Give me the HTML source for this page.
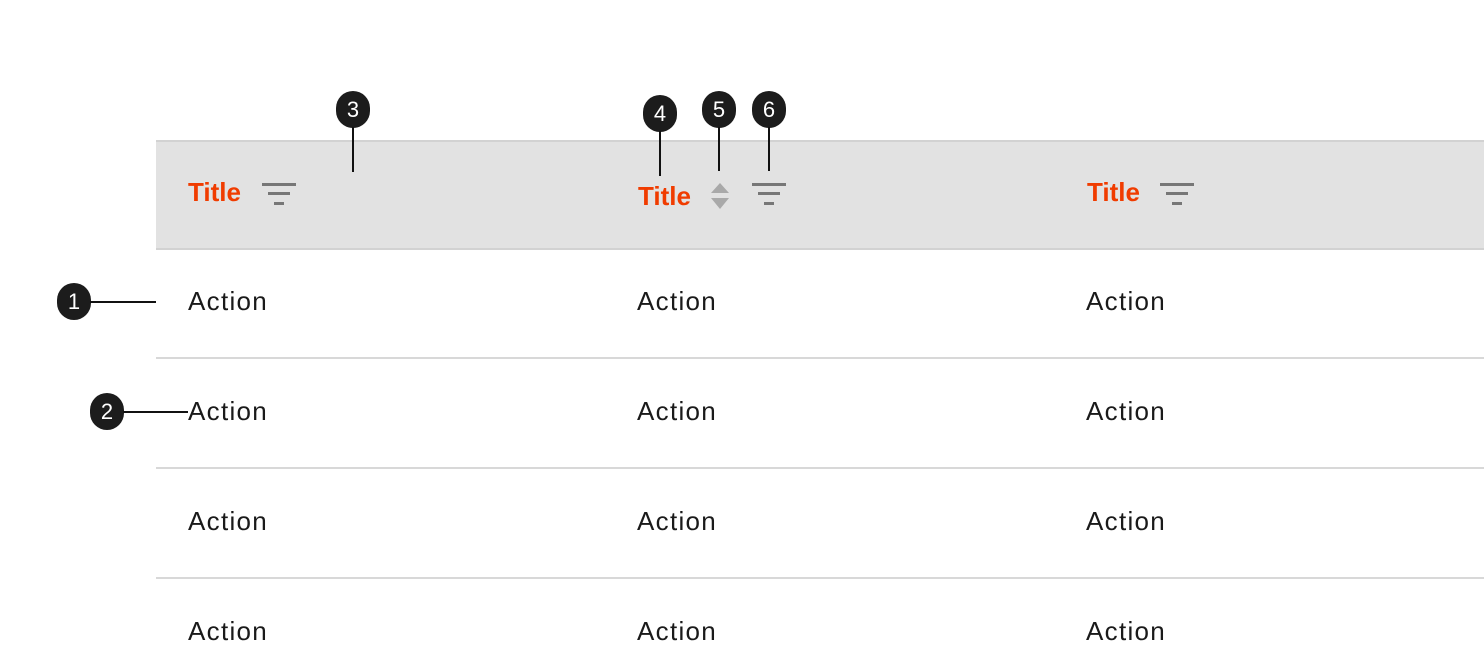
<!DOCTYPE html>
<html><head><meta charset="utf-8"><style>
body{margin:0;width:1484px;height:672px;background:#fff;position:relative;overflow:hidden;font-family:"Liberation Sans",Arial,sans-serif}
.a{position:absolute}
.hdr{left:156px;top:140px;width:1328px;height:106px;background:#e2e2e2;border-top:2px solid #d2d2d2;border-bottom:2px solid #d2d2d2;box-sizing:content-box}
.line{left:156px;width:1328px;height:2px;background:#d8d8d8}
.t{color:#f03c00;font-weight:bold;font-size:26px;line-height:30px}
.c{color:#1a1a1a;font-size:26px;letter-spacing:1.3px;line-height:30px}
.b{width:34px;height:37px;border-radius:17px;background:#1c1c1c;color:#fff;font-size:22px;text-align:center;line-height:37px}
.v{width:2px;background:#111}
.h{height:2px;background:#111}
.f{width:34px;height:24px}
.f i{position:absolute;height:3px;background:#777}
</style></head><body>
<div class="a hdr"></div>
<div class="a line" style="top:357px"></div>
<div class="a line" style="top:467px"></div>
<div class="a line" style="top:577px"></div>

<div class="a t" style="left:188px;top:177px">Title</div>
<div class="a t" style="left:638px;top:181px">Title</div>
<div class="a t" style="left:1087px;top:177px">Title</div>

<div class="a f" style="left:262px;top:183px"><i style="left:0;width:34px;top:0"></i><i style="left:6px;width:22px;top:9px"></i><i style="left:12px;width:10px;top:19px"></i></div>
<div class="a f" style="left:752px;top:183px"><i style="left:0;width:34px;top:0"></i><i style="left:6px;width:22px;top:9px"></i><i style="left:12px;width:10px;top:19px"></i></div>
<div class="a f" style="left:1160px;top:183px"><i style="left:0;width:34px;top:0"></i><i style="left:6px;width:22px;top:9px"></i><i style="left:12px;width:10px;top:19px"></i></div>

<svg class="a" style="left:710px;top:182px" width="20" height="28"><polygon points="10,1 19,11 1,11" fill="#a9a9a9"/><polygon points="1,16 19,16 10,27" fill="#a9a9a9"/></svg>

<div class="c a" style="left:188px;top:286px">Action</div><div class="c a" style="left:637px;top:286px">Action</div><div class="c a" style="left:1086px;top:286px">Action</div>
<div class="c a" style="left:188px;top:396px">Action</div><div class="c a" style="left:637px;top:396px">Action</div><div class="c a" style="left:1086px;top:396px">Action</div>
<div class="c a" style="left:188px;top:506px">Action</div><div class="c a" style="left:637px;top:506px">Action</div><div class="c a" style="left:1086px;top:506px">Action</div>
<div class="c a" style="left:188px;top:616px">Action</div><div class="c a" style="left:637px;top:616px">Action</div><div class="c a" style="left:1086px;top:616px">Action</div>

<div class="a b" style="left:336px;top:91px">3</div><div class="a v" style="left:352px;top:127px;height:45px"></div>
<div class="a b" style="left:643px;top:95px">4</div><div class="a v" style="left:659px;top:131px;height:45px"></div>
<div class="a b" style="left:702px;top:91px">5</div><div class="a v" style="left:718px;top:127px;height:44px"></div>
<div class="a b" style="left:752px;top:91px">6</div><div class="a v" style="left:768px;top:127px;height:44px"></div>
<div class="a b" style="left:57px;top:283px">1</div><div class="a h" style="left:90px;top:301px;width:66px"></div>
<div class="a b" style="left:90px;top:393px">2</div><div class="a h" style="left:123px;top:411px;width:65px"></div>
</body></html>
